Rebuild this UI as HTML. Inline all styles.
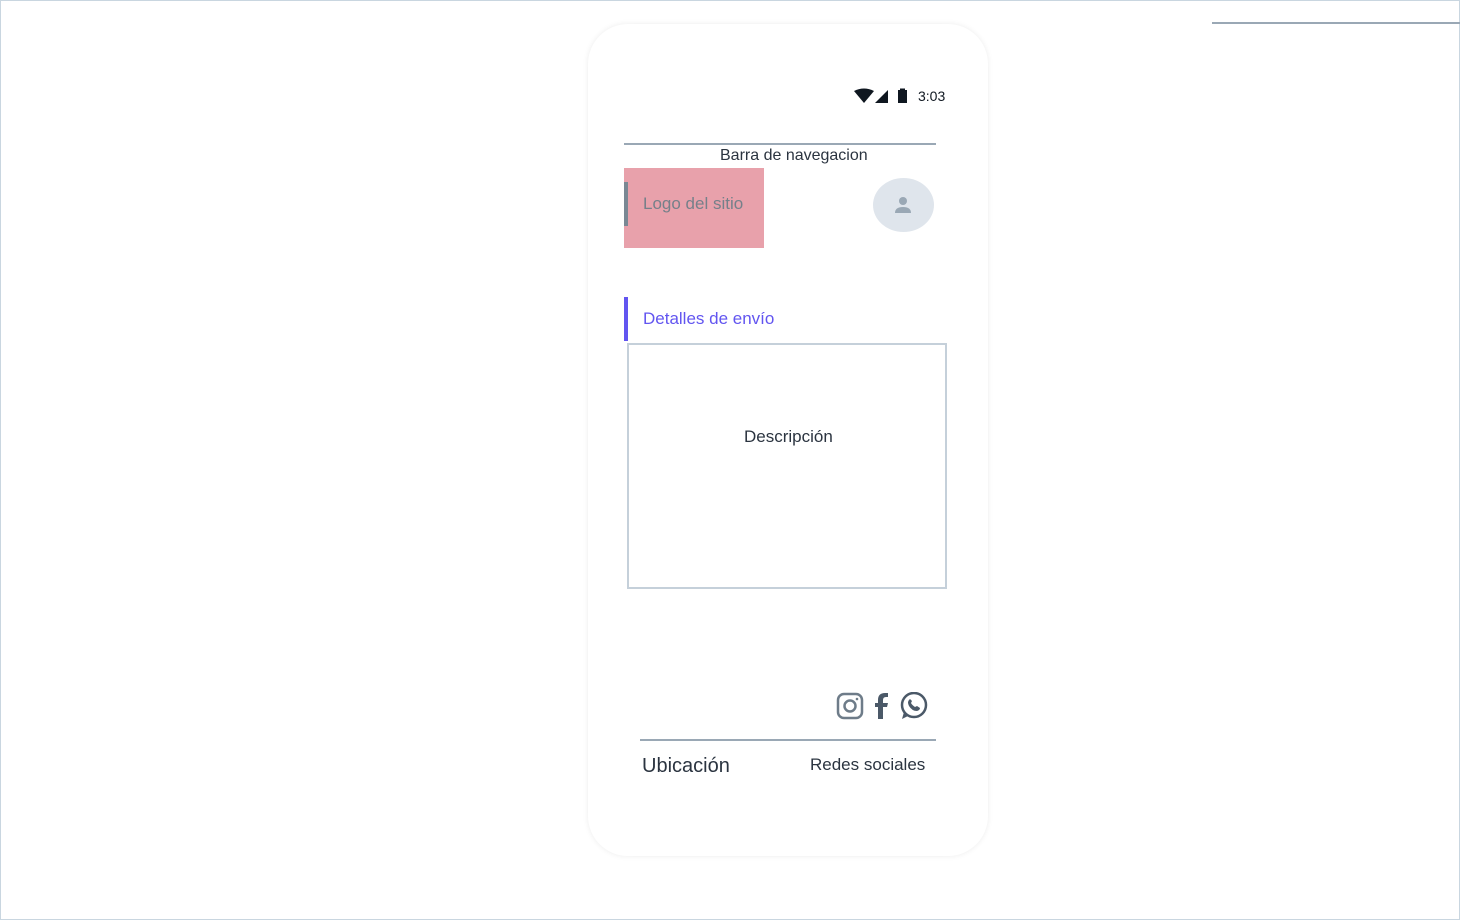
<!DOCTYPE html>
<html><head><meta charset="utf-8"><style>
*{margin:0;padding:0;box-sizing:border-box}
body{width:1460px;height:920px;background:#fff;font-family:"Liberation Sans","DejaVu Sans",sans-serif;position:relative;overflow:hidden;outline:1px solid #c9d6e0;outline-offset:-1px}
.a{position:absolute}
.phone{left:588px;top:24px;width:400px;height:832px;border-radius:40px;background:#fff;box-shadow:0 0 6px rgba(0,0,0,0.08)}
</style></head><body>
<div class="a" style="left:1212px;top:22px;width:248px;height:2px;background:#9aa8b5"></div>
<div class="a phone"></div>
<svg class="a" style="left:854px;top:88px" width="56" height="16" viewBox="0 0 56 16">
<path d="M0 3 Q10 -2 20 3 L10 15 Z" fill="#0f1720"/>
<path d="M21 15 L34 15 L34 2 Z" fill="#0f1720"/>
<rect x="44" y="2" width="9" height="13" fill="#0f1720"/><rect x="46" y="0.5" width="5" height="2" fill="#0f1720"/>
</svg>
<div class="a" style="left:918px;top:88px;font-size:14px;color:#0f1720">3:03</div>
<div class="a" style="left:624px;top:143px;width:312px;height:2px;background:#9aa8b5"></div>
<div class="a" style="left:720px;top:147px;font-size:16px;color:#2b3440">Barra de navegacion</div>
<div class="a" style="left:624px;top:168px;width:140px;height:80px;background:#e8a1ab"></div>
<div class="a" style="left:624px;top:182px;width:4px;height:44px;background:#7a8894"></div>
<div class="a" style="left:643px;top:194px;font-size:17px;color:#76808a">Logo del sitio</div>
<div class="a" style="left:873px;top:178px;width:61px;height:54px;border-radius:50%;background:#dfe5ec"></div>
<svg class="a" style="left:893px;top:195px" width="20" height="20" viewBox="0 0 20 20"><circle cx="10" cy="6" r="4" fill="#9aa8b5"/><path d="M2 18 Q2 12 10 12 Q18 12 18 18 Z" fill="#9aa8b5"/></svg>
<div class="a" style="left:624px;top:297px;width:4px;height:44px;background:#6255f0"></div>
<div class="a" style="left:643px;top:309px;font-size:17px;color:#6255f0">Detalles de envío</div>
<div class="a" style="left:627px;top:343px;width:320px;height:246px;border:2px solid #c5d0da"></div>
<div class="a" style="left:744px;top:427px;font-size:17px;color:#2b3440">Descripción</div>
<svg class="a" style="left:836px;top:692px" width="94" height="28" viewBox="0 0 94 28">
<rect x="2" y="2" width="24" height="24" rx="6" fill="none" stroke="#6e7c89" stroke-width="2.5"/>
<circle cx="14" cy="14" r="5.5" fill="none" stroke="#6e7c89" stroke-width="2.5"/><circle cx="21" cy="7" r="1.3" fill="#6e7c89"/>
<path d="M47 27 V15 H51 L52 11 H47 V8 Q47 5 50 5 H52 V1 H49 Q42 1 42 8 V11 H39 V15 H42 V27 Z" fill="#4b5968"/>
<circle cx="78" cy="13" r="12" fill="none" stroke="#4b5968" stroke-width="2.5"/>
<path d="M66 27 L68 20 L72 24 Z" fill="#4b5968"/>
<path d="M73 8 Q71 10 73 14 Q76 19 81 19 Q84 18 84 16 L81 14 L79 15 Q76 13 75 11 L76 9 L74 7 Z" fill="#4b5968"/>
</svg>
<div class="a" style="left:640px;top:739px;width:296px;height:2px;background:#9aa8b5"></div>
<div class="a" style="left:642px;top:755px;font-size:20px;color:#2b3440">Ubicación</div>
<div class="a" style="left:810px;top:755px;font-size:17px;color:#2b3440">Redes sociales</div>
</body></html>
